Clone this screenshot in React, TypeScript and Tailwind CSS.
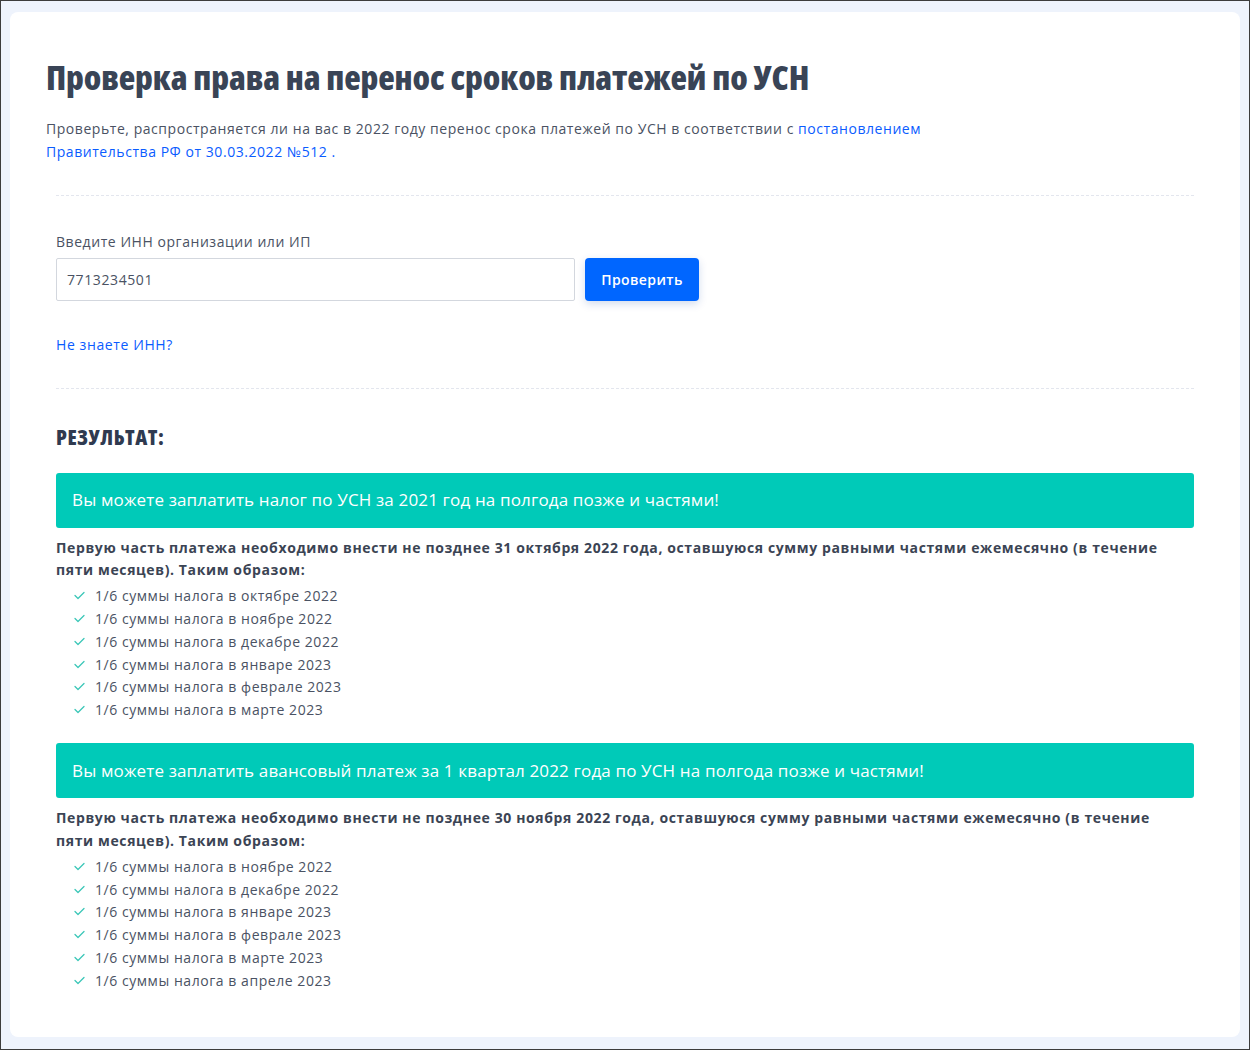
import React from "react";

const Check = () => (
  <svg width="11" height="9" viewBox="0 0 11 9" className="shrink-0">
    <polyline points="1,4.5 4,7.5 10,1.5" fill="none" stroke="#3cc7b8" strokeWidth="1.3" strokeLinecap="round" strokeLinejoin="round" />
  </svg>
);

const Result = ({ title, text, items }: { title: string; text: string; items: string[] }) => (
  <div>
    <div className="flex h-[55px] items-center rounded-[3px] bg-[#00cab8] px-4 text-[17px] tracking-[0.15px] text-white">
      {title}
    </div>
    <p className="mt-[9px] pr-[10px] text-[14px] font-bold leading-[22.5px] tracking-[0.62px] text-[#3b4454]">{text}</p>
    <ul className="mt-[3px] pl-[18px]">
      {items.map((it) => (
        <li key={it} className="flex h-[22.75px] items-center gap-[10px] text-[14px] tracking-[0.55px] text-[#4a5263]">
          <Check />
          <span>{it}</span>
        </li>
      ))}
    </ul>
  </div>
);

export default function App() {
  return (
    <div className="min-h-[1050px] border border-[#3c3c3c] bg-[#eef3fc] px-[9px] pb-[12px] pt-[11px] font-['Open_Sans',sans-serif]">
      <div className="h-[1025px] rounded-lg bg-white px-[36px] pt-[45px]">
        <h1 className="text-[34px] font-extrabold leading-[40px] tracking-[-0.1px] text-[#394456] [font-stretch:condensed]">
          Проверка права на перенос сроков платежей по УСН
        </h1>
        <p className="mt-[20px] max-w-[900px] text-[14px] leading-[23px] tracking-[0.55px] text-[#4a5263]">
          Проверьте, распространяется ли на вас в 2022 году перенос срока платежей по УСН в соответствии с{" "}
          <a className="text-[#0a5cff]">постановлением Правительства РФ от 30.03.2022 №512</a>{" "}
          <span className="text-[#0a5cff]">.</span>
        </p>
        <div className="mx-[10px]">
          <div className="mt-[32px] border-t border-dashed border-[#e3e6ee]" />
          <div className="mt-[35px] text-[14px] tracking-[0.55px] text-[#4a5263]">Введите ИНН организации или ИП</div>
          <div className="mt-[6px] flex gap-[10px]">
            <div className="flex h-[43px] w-[519px] items-center rounded-[2px] border border-[#d3d7de] px-[10px] text-[14px] tracking-[0.6px] text-[#4a5263]">
              7713234501
            </div>
            <button className="h-[43px] w-[114px] rounded-[4px] bg-[#0066ff] text-[14px] font-semibold tracking-[0.4px] text-white shadow-[0_3px_8px_rgba(0,60,160,0.18)]">
              Проверить
            </button>
          </div>
          <div className="mt-[33px] text-[14px] tracking-[0.6px] text-[#0a5cff]">Не знаете ИНН?</div>
          <div className="mt-[33px] border-t border-dashed border-[#e3e6ee]" />
          <div className="mt-[33px] text-[21px] font-extrabold tracking-[0.5px] text-[#2f3a50] [font-stretch:condensed]">РЕЗУЛЬТАТ:</div>
          <div className="mt-[19px]">
            <Result
              title="Вы можете заплатить налог по УСН за 2021 год на полгода позже и частями!"
              text="Первую часть платежа необходимо внести не позднее 31 октября 2022 года, оставшуюся сумму равными частями ежемесячно (в течение пяти месяцев). Таким образом:"
              items={[
                "1/6 суммы налога в октябре 2022",
                "1/6 суммы налога в ноябре 2022",
                "1/6 суммы налога в декабре 2022",
                "1/6 суммы налога в январе 2023",
                "1/6 суммы налога в феврале 2023",
                "1/6 суммы налога в марте 2023",
              ]}
            />
          </div>
          <div className="mt-[22px]">
            <Result
              title="Вы можете заплатить авансовый платеж за 1 квартал 2022 года по УСН на полгода позже и частями!"
              text="Первую часть платежа необходимо внести не позднее 30 ноября 2022 года, оставшуюся сумму равными частями ежемесячно (в течение пяти месяцев). Таким образом:"
              items={[
                "1/6 суммы налога в ноябре 2022",
                "1/6 суммы налога в декабре 2022",
                "1/6 суммы налога в январе 2023",
                "1/6 суммы налога в феврале 2023",
                "1/6 суммы налога в марте 2023",
                "1/6 суммы налога в апреле 2023",
              ]}
            />
          </div>
        </div>
      </div>
    </div>
  );
}
